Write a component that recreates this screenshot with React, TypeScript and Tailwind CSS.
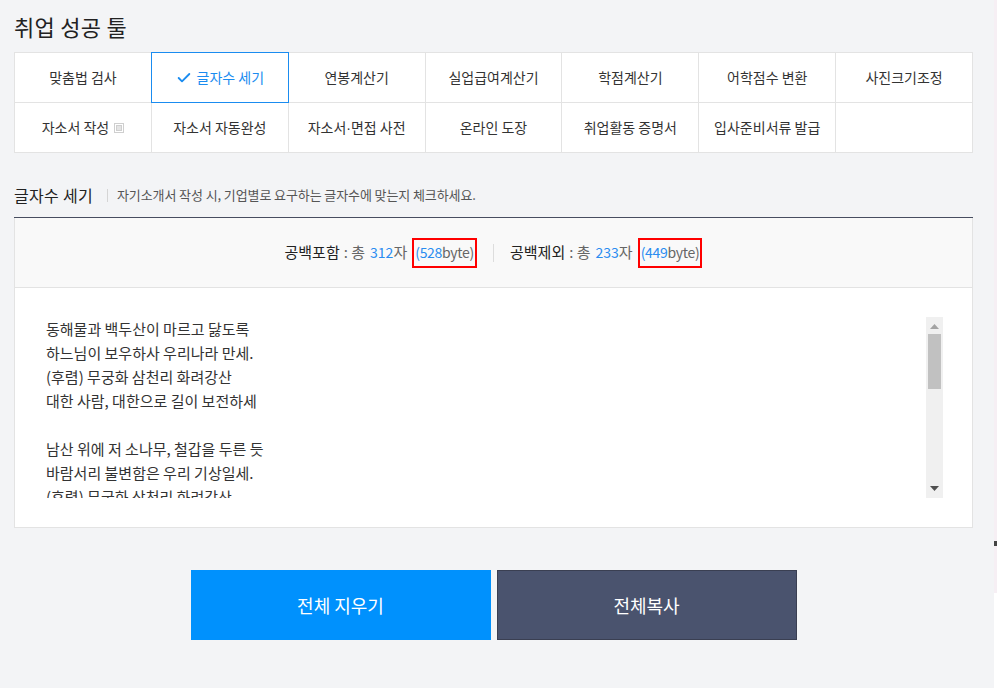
import { Check } from 'lucide-react'

const FONT = '"Noto Sans CJK KR", "Noto Sans", sans-serif'

const row1 = ['맞춤법 검사', '글자수 세기', '연봉계산기', '실업급여계산기', '학점계산기', '어학점수 변환', '사진크기조정']
const row2 = ['자소서 작성', '자소서 자동완성', '자소서·면접 사전', '온라인 도장', '취업활동 증명서', '입사준비서류 발급', '']

const lyrics = [
  '동해물과 백두산이 마르고 닳도록',
  '하느님이 보우하사 우리나라 만세.',
  '(후렴) 무궁화 삼천리 화려강산',
  '대한 사람, 대한으로 길이 보전하세',
  '',
  '남산 위에 저 소나무, 철갑을 두른 듯',
  '바람서리 불변함은 우리 기상일세.',
  '(후렴) 무궁화 삼천리 화려강산',
  '대한 사람, 대한으로 길이 보전하세',
]

function PopupIcon() {
  return (
    <svg width="10" height="10" viewBox="0 0 10 10" className="ml-[5px] mt-[1px]">
      <rect x="0.5" y="0.5" width="9" height="9" fill="none" stroke="#cfcfcf" />
      <rect x="2.5" y="2.5" width="5" height="5" fill="#e4e4e4" stroke="#cfcfcf" />
    </svg>
  )
}

// the middle dot in the CJK font is full width, the reference one is narrow
function Label({ text }: { text: string }) {
  if (!text.includes('·')) return <>{text}</>
  const [a, b] = text.split('·')
  return (
    <>
      {a}
      <span style={{ fontFamily: '"Liberation Sans", sans-serif' }}>·</span>
      {b}
    </>
  )
}

function TabCell({ label, active, popup }: { label: string; active?: boolean; popup?: boolean }) {
  return (
    <div className="relative h-[50px] flex items-center justify-center border-r border-b border-[#e3e3e3] bg-white text-[14px] text-[#333]">
      {active && <span className="absolute -left-px -top-px -right-px -bottom-px border border-[#1a8cf0]" />}
      {active && <Check size={16} strokeWidth={2.8} className="mr-[5px] text-[#1a8cf0]" />}
      <span className={active ? 'text-[#1a8cf0]' : ''}><Label text={label} /></span>
      {popup && <PopupIcon />}
    </div>
  )
}

function Stat({ label, count, bytes }: { label: string; count: number; bytes: number }) {
  return (
    <div className="flex items-center text-[15px] text-[#666]">
      <span className="text-[#222]">{label}</span>
      <span className="ml-[4px]">: 총</span>
      <span className="ml-[5px] text-[14px] text-[#2a8cf0]">{count}</span>
      <span>자</span>
      <span className="ml-[5px] h-[30px] flex items-center border-2 border-[#ff0000] px-[1px] text-[14px] tracking-[-0.3px]">
        <span className="text-[#2a8cf0]">({bytes}</span>
        <span>byte)</span>
      </span>
    </div>
  )
}

function FakeScrollbar() {
  return (
    <div className="w-[17px] h-full bg-[#f0f0f0] flex flex-col items-center shrink-0">
      <svg width="9" height="5" viewBox="0 0 9 5" className="mt-[7px]"><path d="M0 5 L4.5 0 L9 5 Z" fill="#a3a3a3" /></svg>
      <div className="mt-[5px] w-[13px] h-[55px] bg-[#c1c1c1]" />
      <div className="flex-1" />
      <svg width="9" height="5" viewBox="0 0 9 5" className="mb-[7px]"><path d="M0 0 L9 0 L4.5 5 Z" fill="#505050" /></svg>
    </div>
  )
}

export default function App() {
  return (
    <div className="min-h-screen flex bg-[#f3f4f6]" style={{ fontFamily: FONT }}>
      <div className="w-[994px] shrink-0 pl-[14px] pr-[21px]">
        <h1 className="pt-[10px] h-[52px] text-[22px] leading-[32px] text-[#222] tracking-[0.3px]">취업 성공 툴</h1>

        <div className="grid grid-cols-7 border-t border-l border-[#e3e3e3]">
          {row1.map((t, i) => <TabCell key={t} label={t} active={i === 1} />)}
          {row2.map((t, i) => <TabCell key={'r2' + i} label={t} popup={i === 0} />)}
        </div>

        <div className="h-[64px] flex items-end pb-[11px]">
          <span className="text-[16px] leading-[22px] text-[#222] tracking-[0.3px]">글자수 세기</span>
          <span className="ml-[14px] mr-[9px] mb-[4px] w-px h-[13px] bg-[#d5d5d5]" />
          <span className="text-[13px] leading-[22px] text-[#555] tracking-[-0.1px]">자기소개서 작성 시, 기업별로 요구하는 글자수에 맞는지 체크하세요.</span>
        </div>

        <div className="border-t border-[#474d60]">
          <div className="h-[70px] flex items-center justify-center bg-[#f9f9f9] border-x border-b border-[#e3e3e3]">
            <Stat label="공백포함" count={312} bytes={528} />
            <span className="mx-[16px] w-px h-[18px] bg-[#dddddd]" />
            <Stat label="공백제외" count={233} bytes={449} />
          </div>
          <div className="h-[240px] bg-white border-x border-b border-[#e3e3e3] pt-[29px] pb-[29px] pl-[31px] pr-[29px]">
            <div className="h-full flex">
              <div className="flex-1 overflow-hidden text-[15px] leading-[24px] text-[#333]">
                {lyrics.map((l, i) => <div key={i} className="h-[24px]">{l}</div>)}
              </div>
              <FakeScrollbar />
            </div>
          </div>
        </div>

        <div className="mt-[42px] flex justify-center gap-[6px]">
          <button className="w-[300px] h-[70px] bg-[#0091fd] text-white text-[18px]">전체 지우기</button>
          <button className="w-[300px] h-[70px] bg-[#4a536e] border border-[#3a3f52] text-white text-[18px]">전체복사</button>
        </div>
      </div>
      <div className="flex-1 flex flex-col bg-[#f6eff4] pt-[541px]">
        <div className="w-[3px] h-[5px] bg-[#444]" />
        <div className="mt-[47px] h-[96px] bg-white" />
      </div>
    </div>
  )
}
